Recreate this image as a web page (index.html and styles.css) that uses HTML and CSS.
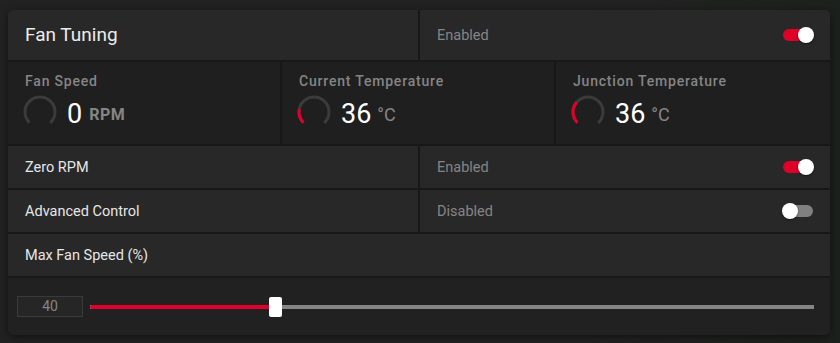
FILE: index.html
```html
<!DOCTYPE html>
<html lang="en">
<head>
  <meta charset="UTF-8" />
  <meta name="viewport" content="width=device-width, initial-scale=1.0" />
  <title>Fan Tuning</title>
  <link rel="stylesheet" href="styles.css">
</head>
<body>
<div class="panel">
  <div class="row split tall">
    <div class="cell title">Fan Tuning</div>
    <div class="cell state">
      <span>Enabled</span>
      <div class="toggle on"><div class="knob"></div></div>
    </div>
  </div>

  <div class="stats">
    <div class="stat">
      <div class="stat-label">Fan Speed</div>
      <div class="stat-value">
        <svg class="gauge" width="36" height="36" viewBox="0 0 36 36">
          <circle cx="18" cy="18" r="15" fill="none" stroke="#3b3b3b" stroke-width="3" stroke-dasharray="70.7 100" transform="rotate(135 18 18)" />
        </svg>
        <span class="num">0</span>
        <span class="unit bold">RPM</span>
      </div>
    </div>
    <div class="stat">
      <div class="stat-label">Current Temperature</div>
      <div class="stat-value">
        <svg class="gauge" width="36" height="36" viewBox="0 0 36 36">
          <circle cx="18" cy="18" r="15" fill="none" stroke="#3b3b3b" stroke-width="3" stroke-dasharray="70.7 100" transform="rotate(135 18 18)" />
          <circle cx="18" cy="18" r="15" fill="none" stroke="#e0002b" stroke-width="3" stroke-dasharray="14.4 100" transform="rotate(135 18 18)" />
        </svg>
        <span class="num">36</span>
        <span class="unit">°C</span>
      </div>
    </div>
    <div class="stat">
      <div class="stat-label">Junction Temperature</div>
      <div class="stat-value">
        <svg class="gauge" width="36" height="36" viewBox="0 0 36 36">
          <circle cx="18" cy="18" r="15" fill="none" stroke="#3b3b3b" stroke-width="3" stroke-dasharray="70.7 100" transform="rotate(135 18 18)" />
          <circle cx="18" cy="18" r="15" fill="none" stroke="#e0002b" stroke-width="3" stroke-dasharray="22.3 100" transform="rotate(135 18 18)" />
        </svg>
        <span class="num">36</span>
        <span class="unit">°C</span>
      </div>
    </div>
  </div>

  <div class="row split">
    <div class="cell label">Zero RPM</div>
    <div class="cell state">
      <span>Enabled</span>
      <div class="toggle on"><div class="knob"></div></div>
    </div>
  </div>

  <div class="row split">
    <div class="cell label">Advanced Control</div>
    <div class="cell state">
      <span>Disabled</span>
      <div class="toggle"><div class="knob"></div></div>
    </div>
  </div>

  <div class="row">
    <div class="cell label">Max Fan Speed (%)</div>
  </div>

  <div class="slider-row">
    <div class="num-box">40</div>
    <div class="slider">
      <div class="fill" style="width: 25%"></div>
      <div class="thumb" style="left: 25%"></div>
    </div>
  </div>
</div>
</body>
</html>
```

FILE: styles.css
```css
* {
  margin: 0;
  padding: 0;
  box-sizing: border-box;
}

body {
  font-family: Roboto, 'Liberation Sans', sans-serif;
  background: linear-gradient(90deg, #222 0%, #222 70%, #1d211d 100%);
  padding: 10px 10px 0 8px;
  height: 343px;
  overflow: hidden;
}

.panel {
  width: 822px;
  display: flex;
  flex-direction: column;
  gap: 2px;
  background-color: #181818;
  border-radius: 5px;
  overflow: hidden;
  box-shadow: 0 2px 8px rgba(0, 0, 0, 0.5);
}

.row {
  display: grid;
  grid-template-columns: 1fr;
  height: 42px;
}

.row.split {
  grid-template-columns: 410px 410px;
  gap: 2px;
}

.row.tall {
  height: 50px;
}

.cell {
  background-color: #282828;
  display: flex;
  align-items: center;
  padding: 0 16px 0 17px;
}

.title {
  font-size: 19px;
  color: #ececec;
  padding-bottom: 1px;
}

.label {
  font-size: 14.5px;
  color: #e6e6e6;
}

.state {
  justify-content: space-between;
  font-size: 14.5px;
  color: #858585;
}

.toggle {
  position: relative;
  width: 32px;
  height: 16px;
}

.toggle::before {
  content: "";
  position: absolute;
  left: 1px;
  right: 1px;
  top: 2px;
  height: 12px;
  border-radius: 6px;
  background-color: #808080;
}

.toggle.on::before {
  background-color: #de0029;
}

.knob {
  position: absolute;
  top: 0;
  left: 0;
  width: 16px;
  height: 16px;
  border-radius: 50%;
  background-color: #fff;
  box-shadow: 0 1px 2px rgba(0, 0, 0, 0.5);
}

.toggle.on .knob {
  left: 16px;
}

.stats {
  display: grid;
  grid-template-columns: 272px 272px 274px;
  gap: 2px;
  height: 82px;
}

.stat {
  background-color: #1f1f1f;
  padding: 10px 16px 0 17px;
}

.stat-label {
  font-size: 14px;
  font-weight: 500;
  letter-spacing: 0.8px;
  color: #858585;
  line-height: 18px;
}

.stat-value {
  display: flex;
  align-items: center;
  margin-top: 4px;
  margin-left: -3px;
}

.gauge {
  margin-right: 9px;
}

.num {
  font-size: 27px;
  color: #fff;
  padding-top: 4px;
}

.unit {
  font-size: 18px;
  color: #858585;
  margin-left: 6px;
  padding-top: 5px;
}

.unit.bold {
  font-size: 16px;
  font-weight: 700;
  letter-spacing: 0.5px;
  margin-left: 7px;
}

.slider-row {
  background-color: #212121;
  height: 57px;
  display: flex;
  align-items: center;
  padding: 0 16px 0 9px;
}

.num-box {
  width: 66px;
  height: 21px;
  border: 1px solid #3a3a3a;
  background-color: #262626;
  color: #858585;
  font-size: 14px;
  text-align: center;
  line-height: 19px;
}

.slider {
  position: relative;
  flex: 1;
  height: 4px;
  margin-left: 7px;
  background-color: #858585;
}

.fill {
  height: 100%;
  background-color: #e0002b;
  border-radius: 2px 0 0 2px;
}

.thumb {
  position: absolute;
  top: -8px;
  width: 13px;
  height: 20px;
  margin-left: -2px;
  background-color: #fff;
  border-radius: 2px;
}
```
